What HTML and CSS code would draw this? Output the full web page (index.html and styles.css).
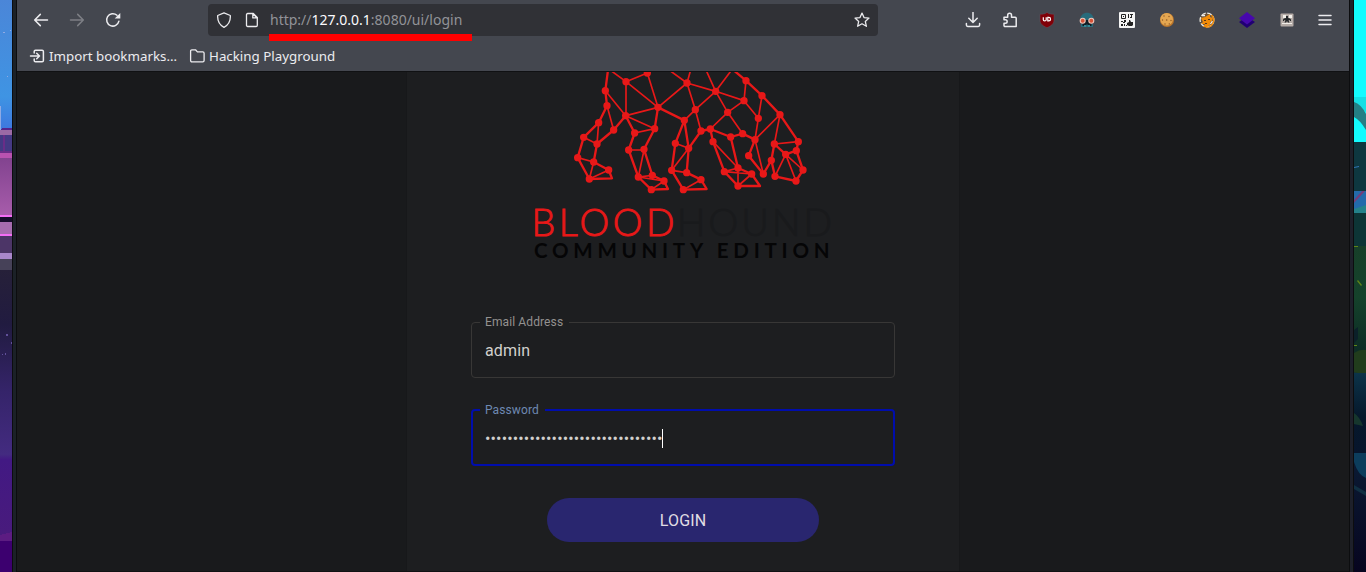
FILE: index.html
```html
<!DOCTYPE html>
<html lang="en">
<head>
<meta charset="utf-8">
<title>BloodHound</title>
<link rel="stylesheet" href="styles.css">
</head>
<body>
<div class="desktop">
  <svg class="wall" width="12" height="572" viewBox="0 0 12 572" shape-rendering="crispEdges">
    <defs>
      <linearGradient id="sky" x2="0" y2="1"><stop offset="0" stop-color="#4b86d8"/><stop offset=".75" stop-color="#3f94e3"/><stop offset="1" stop-color="#3d78df"/></linearGradient>
      <linearGradient id="wallp" x2="0" y2="1"><stop offset="0" stop-color="#82438f"/><stop offset="1" stop-color="#a75cab"/></linearGradient>
      <linearGradient id="dusk" x2="0" y2="1"><stop offset="0" stop-color="#262039"/><stop offset=".2" stop-color="#211b40"/><stop offset=".45" stop-color="#35246a"/><stop offset=".68" stop-color="#432b80"/><stop offset=".7" stop-color="#421983"/><stop offset="1" stop-color="#491b7c"/></linearGradient>
    </defs>
    <path fill="url(#sky)" d="M0 0h12v129H0z"/>
    <path fill="#8faae4" d="M0 106h1v24H0zM3 32h2v1H3zM10 30h1v1h-1zM7 76h1v1H7z"/>
    <path fill="#55258b" d="M2 128h10v2H0z"/><path fill="#9b6aa5" d="M0 130h12v5H0z"/>
    <path fill="#453984" d="M0 135h12v17H0z"/><path fill="#692d87" d="M3 135h2v17H3zM0 151h12v2H0z"/>
    <path fill="#b952b0" d="M0 153h12v5H0z"/><path fill="url(#wallp)" d="M0 158h12v57H0z"/>
    <path fill="#f36df5" d="M0 215h12v2H0zM0 234h12v2H0z"/><path fill="#160c2b" d="M0 217h12v5H0z"/>
    <path fill="#a66caf" d="M0 222h12v12H0z"/><path fill="#4c3567" d="M0 236h12v17H0z"/>
    <path fill="#a987cb" d="M0 253h12v6H0z"/><path fill="#464158" d="M0 259h12v11H0z"/>
    <path fill="url(#dusk)" d="M0 270h12v271H0z"/><path fill="#61509a" d="M6 334h2v2H6zM11 342h1v2h-1zM5 353h1v2H5zM2 354h1v1H2z"/>
    <path fill="#5c1c82" d="M0 535l12-3v9H0z"/><path fill="#3c006f" d="M0 541h12v31H0z"/>
  </svg>
  <div class="frame"></div>
  <div class="window">
    <div class="navbar">
      <div class="navbuttons">
        <svg class="icon" viewBox="0 0 16 16"><path class="ln" d="M14.5 8H1.800M7.300 2.400L1.700 8l5.600 5.600"/></svg>
        <svg class="icon dim" viewBox="0 0 16 16"><path class="ln" d="M1.500 8h12.700M8.700 2.400L14.300 8l-5.600 5.600"/></svg>
        <svg class="icon" viewBox="0 0 16 16"><path class="ln" d="M13.900 9.200A6.200 6.200 0 1 1 12 3.300"/><path fill="currentColor" d="M15.300 1v5.600H9.700z"/></svg>
      </div>
      <div class="urlbar">
        <svg class="icon" viewBox="0 0 16 16"><path class="ln thin" d="M8 .9l6.300 2.600c.4 5.500-1.400 9.300-6.300 11.800C3.100 12.800 1.300 9 1.700 3.500z"/></svg>
        <svg class="icon page" viewBox="0 0 16 16"><path class="ln thin" d="M3.700 1.500h5.600l4 4v7.800c0 .7-.5 1.200-1.200 1.200H3.700c-.7 0-1.200-.5-1.200-1.200V2.700c0-.7.5-1.200 1.200-1.200z"/><path class="ln thin" d="M8.800 1.800v4.100H13z"/></svg>
        <span class="url">http://<b>127.0.0.1</b>:8080/ui/login</span>
        <svg class="icon" viewBox="0 0 16 16"><path class="ln thin" d="M8 1.100l2 4.500 5 .5-3.700 3.300 1.100 4.900L8 11.800l-4.400 2.500 1.100-4.900L1 6.100l5-.5z"/></svg>
        <i class="marker"></i>
      </div>
      <div class="tools">
        <svg class="icon" viewBox="0 0 16 16"><path class="ln" d="M8 .4v9.900M3.800 6.300L8 10.500l4.200-4.200M1.400 11.500v1.600c0 .8.500 1.300 1.300 1.300h10.600c.8 0 1.300-.5 1.300-1.300v-1.600"/></svg>
        <svg class="icon" viewBox="0 0 16 16"><path class="ln" d="M2 5.200h3.700V3.100a1.900 1.900 0 0 1 3.800 0v2.100h3.700c.6 0 1 .4 1 1v8.300H3.100c-.7 0-1.100-.4-1.100-1.100v-2.100h1.400a1.700 1.700 0 0 0 0-3.500H2z"/></svg>
        <svg class="icon" viewBox="0 0 16 16"><path fill="#800008" stroke="#65535d" stroke-width=".5" d="M8 .4C6 2 3.500 2.200 1 2.200V8c0 4 3 6 7 7.700 4-1.700 7-3.700 7-7.700V2.200C12.500 2.200 10 2 8 .4z"/><path fill="none" stroke="#fff" stroke-width="1.200" d="M4.300 5.300v2.400c0 1.600 2.900 1.600 2.900 0V5.300M8.800 5.400v3.500h1a1.750 1.750 0 0 0 0-3.500z"/></svg>
        <svg class="icon" viewBox="0 0 16 16"><path fill="#286b7b" d="M1.200 7.500C1.500 3 4.400.7 8 .7S14.500 3 14.800 7.500V10H1.200zM2 12h12v3H2z"/><path fill="#111d24" d="M3.500 8h9v6h-3l-1.500-2L6.500 14h-3z"/><path fill="#348895" d="M5 13h2v2H5zM9 13h2v2H9z"/><g fill="#d65237" stroke="#efc8bc" stroke-width="1.100"><circle cx="3.700" cy="8.700" r="2.500"/><circle cx="12.300" cy="8.700" r="2.500"/></g></svg>
        <svg class="icon" viewBox="0 0 16 16"><rect width="16" height="16" rx="1" fill="#f5f5f5"/><path fill="none" stroke="#222" d="M2.500 2.500h4v4h-4z"/><path fill="#222" d="M4 4h1v1H4zM9 2h1v4H9zM11 2h3v1h-1v3h-2V5h1V3h-1zM2 9h2v1H2zM5 8h2v2H5zM4 10h2v1H4zM2 12h2v2H2zM5 12h1v2H5zM7 13h1v1H7zM10 8h1l1 2h2v3l-1 1h-3l-2-1v-2l2-1z"/></svg>
        <svg class="icon" viewBox="0 0 16 16"><circle cx="8" cy="8" r="7" fill="#b8742a"/><circle cx="7.600" cy="7.300" r="6.300" fill="#e3a651"/><g fill="#8a5526"><circle cx="5" cy="4" r=".7"/><circle cx="10" cy="4.500" r=".7"/><circle cx="3.500" cy="8" r=".7"/><circle cx="7.700" cy="8" r=".8"/><circle cx="12" cy="8.500" r=".7"/><circle cx="6" cy="12" r=".7"/><circle cx="10.300" cy="11.900" r=".7"/></g></svg>
        <svg class="icon" viewBox="0 0 16 16"><circle cx="8" cy="8" r="6.900" fill="#6c553d" stroke="#e9e7df" stroke-width="1.300" stroke-dasharray="5 1.500"/><path fill="#f18b08" d="M2 6l4-1 5-3v3l3 1-1 3-2 1 1 2-4 3H4l2-3H2l2-2z"/><path fill="none" stroke="#eee" stroke-width="1.300" d="M3 3.500h3M11.500 12l2-3"/><path fill="#5b3717" d="M5 8h2v1H5zM9 7h2v1H9zM6 11h2v1H6z"/><path fill="none" stroke="#f18b08" stroke-width="1.400" d="M12.500 3a7 7 0 0 1-6 12"/></svg>
        <svg class="icon" viewBox="0 0 16 16"><path fill="#210073" d="M0 10l3-2h10l3 2-8 6z"/><path fill="#4708ad" d="M8 0l8 6.300-8 6.200-8-6.200z"/></svg>
        <svg class="icon" viewBox="0 0 16 16"><rect x="1.500" y="1.500" width="13" height="13" rx="1" fill="#b5aca7"/><path fill="#f1eee9" d="M4 3h3v3H4zM10 3h3v3h-3zM3 11h10v1H3z"/><path fill="#24272a" d="M7 4h2v2l2 .5 1 1V9h-1V8L9.500 8.500l1 2H9L8 9l-1 1.500H5.500l1-2L5 8v1H4V7.500l1-1L7 6z"/></svg>
        <svg class="icon" viewBox="0 0 16 16"><path class="ln" d="M2 3.500h12M2 8h12M2 12.500h12"/></svg>
      </div>
    </div>
    <div class="bookmarks">
      <svg class="icon" viewBox="0 0 16 16"><path class="ln" d="M5.200 5V3.500c0-.8.500-1.300 1.300-1.300h6.600c.8 0 1.300.5 1.300 1.300v9c0 .8-.5 1.300-1.300 1.300H6.500c-.8 0-1.300-.5-1.300-1.300V11M1.500 8h9M7.700 5.200L10.500 8l-2.800 2.800"/></svg>
      <span class="import">Import bookmarks…</span>
      <svg class="icon" viewBox="0 0 16 16"><path class="ln thin" d="M2.900 1.800h3.600l1.900 2.100h5.400c.8 0 1.300.5 1.300 1.300v7.300c0 .8-.5 1.300-1.300 1.300H2.900c-.8 0-1.300-.5-1.300-1.300V3.100c0-.8.500-1.300 1.300-1.300z"/></svg>
      <span>Hacking Playground</span>
    </div>
    <main class="viewport">
      <section class="card">
        <svg class="logo" width="320" height="198" viewBox="523 72 320 198">
          <g transform="translate(565 70) scale(.33333)" fill="none" stroke="#e81818" stroke-linejoin="round">
            <path stroke-width="7" d="M129 0L121 62 126 107 101 158 56 202 38 263 73 327 141 325 131 300 86 276 96 222 146 180 182 137 209 189 191 240 220 321 259 359 309 357 297 333 262 316 237 238 269 176 279 112 358 151 331 220 320 301 355 359 425 357 408 329 365 308 371 235 408 183 436 177 444 215 478 305 519 348 585 348 560 312 519 294 497 201 533 191 570 209 551 257 595 312 619 271 628 222M505 0L543 32 591 77 645 134 700 215 694 242 714 300 693 333 630 319 619 271M694 242L662 253 628 222M436 177L497 201M358 151L371 235"/>
            <path stroke-width="5" d="M138 2L183 35 247 9 279 112 183 35V137L279 112 366 39 315 2M377 0L366 39 452 64 423 0M452 64L500 0M247 9L255 0M121 62L182 137 269 176 209 189M126 107L146 180M101 158L96 222 56 202M38 263L86 276 73 327 131 300M191 240H237L220 321 262 316M220 321L297 333 259 359M366 39L391 119 358 151M391 119L452 64 537 92 543 32M452 64L488 127 436 177M488 127L537 92 580 145 591 77M391 119L408 183M488 127L533 191M580 145L570 209 645 134 628 222 700 215M570 209L595 312M331 220L371 235 320 301 365 308M355 359L408 329M444 215L519 294 478 305 560 312 519 348V294M662 253L630 319M662 253L693 333M662 253L714 300"/>
            <path stroke-width="22" stroke-linecap="round" d="M183 35h0M247 9h0M121 62h0M126 107h0M182 137h0M279 112h0M366 39h0M101 158h0M146 180h0M56 202h0M96 222h0M38 263h0M86 276h0M131 300h0M73 327h0M209 189h0M269 176h0M191 240h0M237 238h0M220 321h0M262 316h0M297 333h0M259 359h0M358 151h0M331 220h0M371 235h0M320 301h0M365 308h0M355 359h0M408 329h0M452 64h0M543 32h0M591 77h0M645 134h0M537 92h0M391 119h0M488 127h0M580 145h0M408 183h0M436 177h0M444 215h0M497 201h0M533 191h0M570 209h0M628 222h0M700 215h0M694 242h0M662 253h0M714 300h0M693 333h0M630 319h0M619 271h0M595 312h0M551 257h0M478 305h0M519 294h0M560 312h0M519 348h0"/>
          </g>
          <text class="word" x="531.500" y="235.500" textLength="143" fill="#e81818" stroke="#e81818">BLOOD</text>
          <text class="word" x="677" y="235.500" textLength="155" fill="#191a1c" stroke="#191a1c">HOUND</text>
          <text class="edition" x="534" y="257.700" textLength="295.500">COMMUNITY EDITION</text>
        </svg>
        <form class="form">
          <fieldset class="field"><legend>Email Address</legend><span>admin</span></fieldset>
          <fieldset class="field focused"><legend>Password</legend><span>••••••••••••••••••••••••••••••••</span><i class="caret"></i></fieldset>
          <button class="login" type="button">LOGIN</button>
        </form>
      </section>
    </main>
  </div>
  <div class="frame right"></div>
  <svg class="wall" width="12" height="572" viewBox="0 0 12 572">
    <defs>
      <linearGradient id="leaf" x2="0" y2="1"><stop offset="0" stop-color="#173f29"/><stop offset=".4" stop-color="#15422b"/><stop offset=".8" stop-color="#0d2c25"/><stop offset="1" stop-color="#18352e"/></linearGradient>
      <linearGradient id="deep" x2="0" y2="1"><stop offset="0" stop-color="#0c3349"/><stop offset=".55" stop-color="#06182b"/><stop offset="1" stop-color="#07152c"/></linearGradient>
      <linearGradient id="night" x2="0" y2="1"><stop offset="0" stop-color="#0b1c35"/><stop offset="1" stop-color="#07051f"/></linearGradient>
    </defs>
    <path fill="#13fbff" d="M0 0h12v143H0z"/><path fill="#15dfe5" d="M0 97h12v15L0 103z"/>
    <path fill="#247f85" d="M0 102q7 2 12 12v16Q6 120 0 117z"/>
    <path fill="#0e3740" d="M0 142h12v50H0z"/><path fill="#3175b5" d="M0 167l5-1v1l-5 1z"/>
    <path fill="#236aab" d="M0 191h12v24H0z"/><path fill="#743c79" d="M0 200l8-9h3L0 203z"/><path fill="#24828a" d="M0 209l12-4v10H0z"/>
    <path fill="#0d3536" d="M0 213h12v33H0z"/><path fill="url(#leaf)" d="M0 246h12v129H0z"/>
    <path fill="#5f8418" d="M4 280l4 5-1 1-4-5zM0 246h4v1H0zM0 345h3v1H0z"/><path fill="#0b2029" d="M0 330l4-3v12l-4 4z"/><path fill="#213c1c" d="M0 353q6-4 12-3v25l-12-3z"/>
    <path fill="url(#deep)" d="M0 373h12v80H0z"/><path fill="#16362d" d="M0 413q6 4 9 13l-9-2z"/>
    <path fill="url(#night)" d="M0 453h12v119H0z"/><path fill="#0c3d5c" d="M0 453h12v25Q4 475 0 462z"/><path fill="#102f42" d="M0 485l12 7v4L0 489z"/>
  </svg>
</div>
</body>
</html>
```
FILE: styles.css
```css
* { box-sizing: border-box; }
body { margin: 0; background: #191a1c; overflow: hidden; }
.desktop { display: flex; width: 1366px; height: 572px; }
.wall { display: block; flex: none; }
.frame { flex: none; width: 5px; background: #1b2127; border: solid #0c0d0f; border-width: 0 1px; }
.frame.right { background: #1e202a; }
.window { width: 1332px; flex: none; display: flex; flex-direction: column; background: #191a1c; font-family: "Noto Sans", sans-serif; color: #fbfbfe; }
.icon { width: 16px; height: 16px; flex: none; display: block; color: #ececef; }
.dim { color: #7d7f85; }
.ln { fill: none; stroke: currentColor; stroke-width: 1.5; stroke-linecap: round; stroke-linejoin: round; }
.thin { stroke-width: 1.3; }
.navbar { height: 40px; background: #44474f; display: flex; align-items: center; }
.navbuttons { width: 191px; display: flex; gap: 20px; padding-left: 16px; }
.urlbar { position: relative; width: 670px; height: 32px; border-radius: 4px; background: #303136; display: flex; align-items: center; padding: 0 8px; }
.page { margin-left: 12px; }
.url { flex: 1; margin-left: 10px; font-size: 14px; line-height: 20px; color: #929398; white-space: nowrap; }
.url b { font-weight: 400; color: #fbfbfe; }
.marker { position: absolute; left: 61px; top: 30px; width: 203px; height: 7px; background: #f00; }
.tools { margin-left: 75px; display: grid; grid-template-columns: 39px 35px 40px repeat(6, 40px) 36px; justify-items: center; }
.bookmarks { height: 32px; padding-left: 12px; background: #44474f; border-bottom: 1px solid #101113; display: flex; align-items: center; font-size: 13.33px; color: #ececef; white-space: nowrap; }
.bookmarks span { margin-left: 4px; }
.bookmarks .import { width: 128px; margin-right: 12px; }
.viewport { height: 500px; display: flex; justify-content: center; border-bottom: 1px solid #101113; }
.card { width: 554px; background: #1d1e20; border: solid #17181a; border-width: 0 1px; display: flex; flex-direction: column; align-items: center; }
.logo { display: block; flex: none; }
.word { font: 300 37.5px/1 Lato, sans-serif; stroke-width: .9px; }
.edition { font: 700 20.5px/1 Lato, sans-serif; fill: #050506; }
.form { width: 424px; padding-top: 44px; display: flex; flex-direction: column; align-items: center; font-family: Roboto, sans-serif; }
.field { width: 424px; height: 64px; margin: 0 0 24px; padding: 11px 13px 0; border: 1px solid #383736; border-radius: 4px; color: #d2d0cd; display: flex; align-items: flex-start; font-size: 16px; line-height: 19px; letter-spacing: .15px; }
.field legend { height: 16px; margin-left: -5px; padding: 0 6px 0 5px; font-size: 12px; line-height: 16px; color: #949290; letter-spacing: .11px; }
.field.focused { border: 2px solid #000dac; padding: 11px 12px 0; }
.focused legend { color: #6e89b2; }
.caret { width: 1px; height: 19px; margin-left: -1px; background: #fff; }
.login { width: 272px; height: 44px; margin-top: 8px; border: 0; border-radius: 22px; background: #29266f; color: #e0dee4; font: 400 16px Roboto, sans-serif; letter-spacing: .15px; }
```
